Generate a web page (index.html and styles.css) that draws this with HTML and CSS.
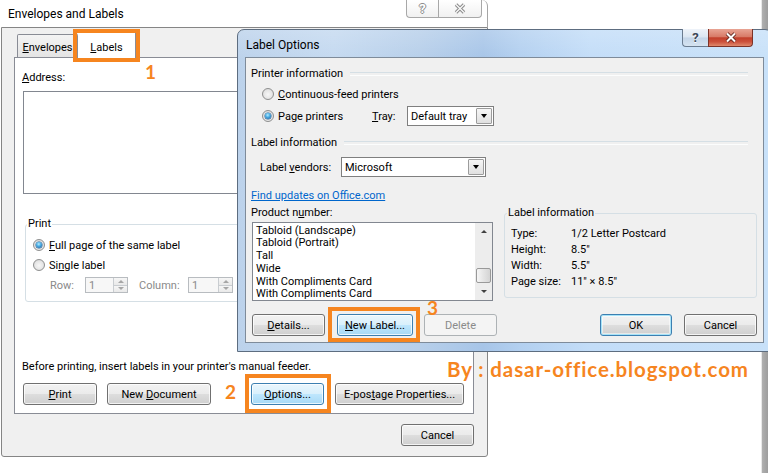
FILE: index.html
```html
<!DOCTYPE html>
<html>
<head>
<meta charset="utf-8">
<title>Envelopes and Labels</title>
<link rel="stylesheet" href="styles.css">
</head>
<body>
<div class="desk">
  <div class="edge"></div>

  <div class="main">
    <div class="main-tb">
      <span class="main-title">Envelopes and Labels</span>
      <div class="main-caps">
        <span class="icb icb-help">?</span>
        <span class="icb icb-close">
          <svg width="14" height="11" viewBox="0 0 14 11"><path d="M3 1.5 L11 9.5 M11 1.5 L3 9.5" stroke="#8c8c8c" stroke-width="3.4" fill="none"/><path d="M3 1.5 L11 9.5 M11 1.5 L3 9.5" stroke="#fbfbfb" stroke-width="1.3" fill="none"/></svg>
        </span>
      </div>
    </div>
    <div class="main-client">
      <div class="tabs">
        <div class="tab"><span><u>E</u>nvelopes</span></div>
        <div class="tab sel"><span><u>L</u>abels</span></div>
      </div>
      <div class="pane">
        <div class="addr-lbl"><u>A</u>ddress:</div>
        <div class="addrbox"></div>
        <fieldset class="grp print">
          <legend>Print</legend>
          <div class="print-body">
            <div class="rrow"><span class="radio on"></span><span class="lt"><u>F</u>ull page of the same label</span></div>
            <div class="rrow"><span class="radio"></span><span class="lt">Si<u>n</u>gle label</span></div>
            <div class="srow">
              <span class="lt s-row">Row:</span>
              <span class="spin w43"><span class="spin-val">1</span><span class="spin-btns"><span class="sb"><i class="tri-up"></i></span><span class="sb"><i class="tri-dn"></i></span></span></span>
              <span class="lt s-col">Column:</span>
              <span class="spin w45"><span class="spin-val">1</span><span class="spin-btns"><span class="sb"><i class="tri-up"></i></span><span class="sb"><i class="tri-dn"></i></span></span></span>
            </div>
          </div>
        </fieldset>
        <div class="note">Before printing, insert labels in your printer's manual feeder.</div>
        <div class="brow">
          <div class="btn w74"><span><u>P</u>rint</span></div>
          <div class="btn w104 ml10"><span>New <u>D</u>ocument</span></div>
          <div class="btn hot w73 ml40"><span><u>O</u>ptions...</span></div>
          <div class="btn w129 ml11"><span>E-pos<u>t</u>age Properties...</span></div>
        </div>
      </div>
      <div class="foot">
        <div class="btn w73"><span>Cancel</span></div>
      </div>
    </div>
  </div>

  <div class="dlg">
    <div class="dtb">
      <span class="dtitle">Label Options</span>
      <div class="dcaps">
        <span class="dcb dcb-help">?</span>
        <span class="dcb dcb-close">
          <svg width="14" height="11" viewBox="0 0 14 11"><path d="M3 1.5 L11 9.5 M11 1.5 L3 9.5" stroke="#5c2119" stroke-width="3.8" fill="none"/><path d="M3 1.5 L11 9.5 M11 1.5 L3 9.5" stroke="#ffffff" stroke-width="2" fill="none"/></svg>
        </span>
      </div>
    </div>
    <div class="dclient">
      <div class="sect"><span>Printer information</span></div>
      <div class="drow r1"><span class="radio"></span><span class="lt"><u>C</u>ontinuous-feed printers</span></div>
      <div class="drow r2"><span class="radio on"></span><span class="lt pp">Pa<u>g</u>e printers</span><span class="lt tray"><u>T</u>ray:</span>
        <div class="combo w87"><span class="combo-val">Default tray</span><span class="combo-btn"><i class="tri-dn big"></i></span></div>
      </div>
      <div class="sect s2"><span>Label information</span></div>
      <div class="vrow"><span class="lt vlbl">Label <u>v</u>endors:</span>
        <div class="combo w145"><span class="combo-val">Microsoft</span><span class="combo-btn"><i class="tri-dn big"></i></span></div>
      </div>
      <div class="linkrow"><a class="link">Find updates on Office.com</a></div>
      <div class="lower">
        <div class="prod">
          <div class="plbl">Product n<u>u</u>mber:</div>
          <div class="list">
            <div class="items">
              <div>Tabloid (Landscape)</div>
              <div>Tabloid (Portrait)</div>
              <div>Tall</div>
              <div>Wide</div>
              <div>With Compliments Card</div>
              <div>With Compliments Card</div>
            </div>
            <div class="vs">
              <div class="vs-btn"><i class="tri-up sc"></i></div>
              <div class="vs-track"><div class="thumb"></div></div>
              <div class="vs-btn"><i class="tri-dn sc"></i></div>
            </div>
          </div>
        </div>
        <fieldset class="grp info">
          <legend>Label information</legend>
          <div class="info-body">
            <div class="kv"><span class="k">Type:</span><span>1/2 Letter Postcard</span></div>
            <div class="kv"><span class="k">Height:</span><span>8.5"</span></div>
            <div class="kv"><span class="k">Width:</span><span>5.5"</span></div>
            <div class="kv"><span class="k">Page size:</span><span>11" × 8.5"</span></div>
          </div>
        </fieldset>
      </div>
      <div class="dbtns">
        <div class="btn w73 ml1"><span><u>D</u>etails...</span></div>
        <div class="btn hot w76 ml12"><span><u>N</u>ew Label...</span></div>
        <div class="btn dis w73 ml11"><span>Delete</span></div>
        <div class="btn def w72 push"><span>OK</span></div>
        <div class="btn w73 ml12"><span>Cancel</span></div>
      </div>
    </div>
  </div>

  <div class="hl hl1"></div>
  <div class="num n1">1</div>
  <div class="hl hl2"></div>
  <div class="num n2">2</div>
  <div class="hl hl3"></div>
  <div class="num n3">3</div>
  <div class="wm">By : dasar-office.blogspot.com</div>
</div>
</body>
</html>
```
FILE: styles.css
```css
* { box-sizing: border-box; }
html, body { margin: 0; padding: 0; }
body {
  width: 768px; height: 473px; overflow: hidden; background: #fff;
  font-family: Roboto, "Liberation Sans", Arial, sans-serif;
  font-size: 11px; line-height: 16px; color: #000;
}
.desk { position: relative; width: 768px; height: 473px; overflow: hidden; background: #fff; }
u { text-decoration: underline; text-underline-offset: 1px; }
i { display: block; }
.lt { padding-top: 2px; }

.edge {
  position: absolute; left: 761px; top: 0; width: 7px; height: 473px;
  background: linear-gradient(90deg, #e8e8e8 0, #e8e8e8 1px, #b0b0b0 1px, #9d9d9d 100%);
}

/* ---------- main window ---------- */
.main { position: absolute; left: 1px; top: 0; width: 487px; }
.main-tb {
  height: 27px; display: flex; align-items: flex-start;
  padding: 0 5px 0 7px; border-right: 1px solid #a5a5a5; border-top-right-radius: 6px;
}
.main-title { font-size: 12px; margin-top: 6px; }
.main-caps { margin-left: auto; display: flex; }
.icb {
  height: 18px; border: 1px solid #a8a8a8; border-top: none;
  background: linear-gradient(#ffffff, #f1f1f1);
  display: flex; align-items: center; justify-content: center;
  color: #fff; font-weight: bold; font-size: 13px;
}
.icb-help { width: 32px; border-radius: 0 0 0 4px; border-right: none;
  text-shadow: 1px 0 #8c8c8c, -1px 0 #8c8c8c, 0 1px #8c8c8c, 0 -1px #8c8c8c; }
.icb-close { width: 44px; border-radius: 0 0 4px 0; }

.main-client {
  height: 430px; border: 1px solid #858585; background: #f0f0f0;
  padding: 3px 13px 0 12px; border-radius: 0 0 3px 3px;
}
.tabs { display: flex; align-items: flex-end; height: 26px; padding-left: 3px; }
.tab {
  height: 23px; width: 61px; border: 1px solid #898c95; border-bottom: none;
  background: linear-gradient(#f4f4f4, #e4e4e4); border-radius: 2px 2px 0 0;
  display: flex; justify-content: center; padding-top: 5px;
}
.tab.sel {
  height: 27px; width: 58px; background: #fff; border-left: none;
  margin-bottom: -1px; position: relative; z-index: 1; padding-top: 8px;
}
.pane { background: #fff; border: 1px solid #898c95; padding: 0 8px 8px; }
.addr-lbl { margin-top: 12px; margin-left: -1px; }
.addrbox { margin-top: 5px; height: 103px; border: 1px solid #828790; background: #fff; }

.grp { margin: 0; padding: 0; border: 1px solid #d5dfe5; border-radius: 3px; min-width: 0; }
.grp legend { padding: 0 1px; line-height: 16px; }
.print { margin: 22px 8px 0 2px; }
.print legend { margin-left: 1px; }
.print-body { padding: 3px 0 6px 7px; }
.rrow, .drow { display: flex; align-items: center; height: 20px; }

.radio {
  width: 12px; height: 12px; flex: none; margin-right: 4px; border-radius: 50%;
  border: 1px solid #8e8f8f;
  background: radial-gradient(circle at 50% 55%, #f7f7f7 0, #e6e6e6 55%, #cfcfcf 100%);
  display: flex; align-items: center; justify-content: center;
}
.radio.on::after {
  content: ""; width: 6px; height: 6px; border-radius: 50%;
  background: radial-gradient(circle at 45% 35%, #b6ecff 0, #4cb0e6 40%, #1d5f9f 90%);
  box-shadow: 0 0 0 0.5px #245e93;
}

.srow { display: flex; align-items: center; height: 20px; padding-left: 17px; color: #8a8a8a; }
.s-row { width: 35px; }
.s-col { width: 49px; margin-left: 11px; }
.spin { display: flex; height: 16px; border: 1px solid #b8bcc0; background: #f7f7f7; }
.spin.w43 { width: 43px; }
.spin.w45 { width: 45px; }
.spin-val { flex: 1; padding: 1px 0 0 3px; line-height: 13px; color: #8a8a8a; }
.spin-btns { width: 14px; display: flex; flex-direction: column; border-left: 1px solid #c9cdd1; }
.sb { flex: 1; display: flex; align-items: center; justify-content: center; background: linear-gradient(#f6f6f6, #e9e9e9); }
.sb + .sb { border-top: 1px solid #c9cdd1; }
.tri-up { width: 0; height: 0; border-left: 3px solid transparent; border-right: 3px solid transparent; border-bottom: 3px solid #a6a6a6; }
.tri-dn { width: 0; height: 0; border-left: 3px solid transparent; border-right: 3px solid transparent; border-top: 3px solid #a6a6a6; }
.tri-dn.big { border-left-width: 3.5px; border-right-width: 3.5px; border-top: 4px solid #000; }
.tri-up.sc { border-bottom-color: #404040; }
.tri-dn.sc { border-top-color: #404040; }

.note { margin-top: 57px; margin-left: -1px; }
.brow { display: flex; margin-top: 8px; }

.btn {
  height: 22px; border: 1px solid #707070; border-radius: 3px; padding-top: 2px;
  background: linear-gradient(#f2f2f2 0%, #ebebeb 48%, #dddddd 52%, #cfcfcf 100%);
  box-shadow: inset 0 0 0 1px rgba(255,255,255,0.75);
  display: flex; align-items: center; justify-content: center; flex: none;
  white-space: nowrap;
}
.btn.hot {
  border-color: #3c7fb1;
  background: linear-gradient(#eaf6fd 0%, #d9f0fc 48%, #bee6fd 52%, #a7d9f5 100%);
}
.btn.def {
  border-color: #3c7fb1;
  box-shadow: inset 0 0 0 1px #a6e3f8, inset 0 0 0 2px rgba(255,255,255,0.5);
}
.btn.dis { border-color: #adb2b5; background: #f4f4f4; box-shadow: none; color: #8a8a8a; }
.w72 { width: 72px; } .w73 { width: 73px; } .w74 { width: 74px; } .w76 { width: 76px; }
.w104 { width: 104px; } .w129 { width: 129px; }
.ml1 { margin-left: 1px; } .ml10 { margin-left: 10px; } .ml11 { margin-left: 11px; }
.ml12 { margin-left: 12px; } .ml40 { margin-left: 40px; }
.push { margin-left: auto; }
.foot { display: flex; justify-content: flex-end; margin-top: 10px; }

/* ---------- Label Options dialog ---------- */
.dlg {
  position: absolute; left: 237px; top: 29px; width: 535px; z-index: 2;
  border: 1px solid #5d6d80; border-radius: 7px 7px 0 0; padding: 0 7px 8px;
  background:
    linear-gradient(rgba(255,255,255,0.18), rgba(255,255,255,0) 30px),
    linear-gradient(90deg, #bcd2eb 0%, #c4d9f0 18%, #b7cfea 34%, #a7c5e8 46%, #b3d0f0 53%, #c3ddf8 66%, #c8e1f9 100%);
}
.dtb { height: 27px; display: flex; align-items: flex-start; }
.dtitle { font-size: 12px; margin: 7px 0 0 1px; }
.dcaps { margin-left: auto; margin-right: 11px; margin-top: -1px; display: flex; }
.dcb {
  height: 18px; display: flex; align-items: center; justify-content: center;
  border: 1px solid #6b7c90; border-top: none; font-weight: bold; font-size: 13px;
}
.dcb-help {
  width: 26px; border-radius: 0 0 0 4px; border-right: none; color: #3b4757;
  background: linear-gradient(#eef3f9 0%, #dbe6f2 48%, #c4d5e8 52%, #d5e3f1 100%);
  text-shadow: 0 1px 0 #fff;
}
.dcb-close {
  width: 45px; border-radius: 0 0 4px 0; border-color: #7c3328;
  background: linear-gradient(#e8a494 0%, #d87b68 45%, #c23f2b 52%, #cc513c 75%, #e08a6d 100%);
}
.dclient { background: #f0f0f0; border: 1px solid #7e8b9a; padding: 8px 6px 6px 5px; }
.sect { display: flex; align-items: center; height: 16px; margin-right: 9px; }
.sect::after {
  content: ""; flex: 1; margin-left: 7px; height: 2px;
  border-top: 1px solid #d5dfe5; border-bottom: 1px solid #fcfdfd;
}
.r1 { margin-top: 2px; padding-left: 11px; }
.r2 { margin-top: 2px; padding-left: 11px; }
.pp { width: 94px; }
.tray { width: 35px; }
.s2 { margin-top: 9px; }
.combo { height: 20px; display: flex; border: 1px solid #7f7f7f; background: #fff; }
.combo.w87 { width: 87px; }
.combo.w145 { width: 145px; }
.combo-val { flex: 1; padding: 1px 0 0 3px; line-height: 17px; }
.combo-btn {
  width: 16px; margin: 1px; border: 1px solid #9c9c9c; border-radius: 1px;
  background: linear-gradient(#f6f6f6, #e0e0e0);
  display: flex; align-items: center; justify-content: center;
}
.vrow { display: flex; align-items: center; margin-top: 6px; padding-left: 9px; }
.vlbl { width: 81px; }
.linkrow { margin-top: 10px; height: 16px; padding-top: 1px; line-height: 15px; }
.link { color: #0066cc; text-decoration: underline; text-underline-offset: 1px; }
.lower { display: grid; grid-template-columns: 242px 253px; column-gap: 11px; margin-top: 1px; align-items: start; }
.plbl { height: 16px; padding-top: 1px; line-height: 15px; }
.list { margin: 2px 0 0 1px; height: 79px; border: 1px solid #828790; background: #fff; display: flex; }
.items { flex: 1; padding: 1.5px 0 0 3px; line-height: 12.8px; }
.vs { width: 17px; display: flex; flex-direction: column; background: #ededed; }
.vs-btn { height: 17px; display: flex; align-items: center; justify-content: center; }
.vs-track { flex: 1; }
.thumb {
  margin: 28px 1px 0; height: 15px; border: 1px solid #999; border-radius: 2px;
  background: linear-gradient(90deg, #f6f6f6, #e4e4e4 50%, #d4d4d4);
}
.info { margin-top: 1px; }
.info legend { margin-left: 2px; }
.info-body { padding: 5px 0 7px 6px; }
.kv { display: flex; height: 16px; }
.k { width: 60px; }
.dbtns { display: flex; margin-top: 13px; }

/* ---------- annotations ---------- */
.hl { position: absolute; border: 4px solid #f6851f; z-index: 5; }
.hl1 { left: 73px; top: 29px; width: 67px; height: 33px; }
.hl2 { left: 245px; top: 374px; width: 86px; height: 39px; }
.hl3 { left: 328px; top: 307px; width: 92px; height: 35px; }
.num {
  position: absolute; z-index: 5; color: #f6851f; font-family: Lato, "Open Sans", sans-serif;
  font-weight: 700; font-size: 19px; line-height: 19px;
}
.n1 { left: 145px; top: 62px; }
.n2 { left: 225px; top: 382px; }
.n3 { left: 427px; top: 298px; }
.wm {
  position: absolute; z-index: 5; left: 447px; top: 359px; color: #f6851f;
  font-family: Lato, "Open Sans", sans-serif; font-weight: 700; font-size: 20.5px; line-height: 21px;
  letter-spacing: 0.9px; white-space: nowrap;
}
```
